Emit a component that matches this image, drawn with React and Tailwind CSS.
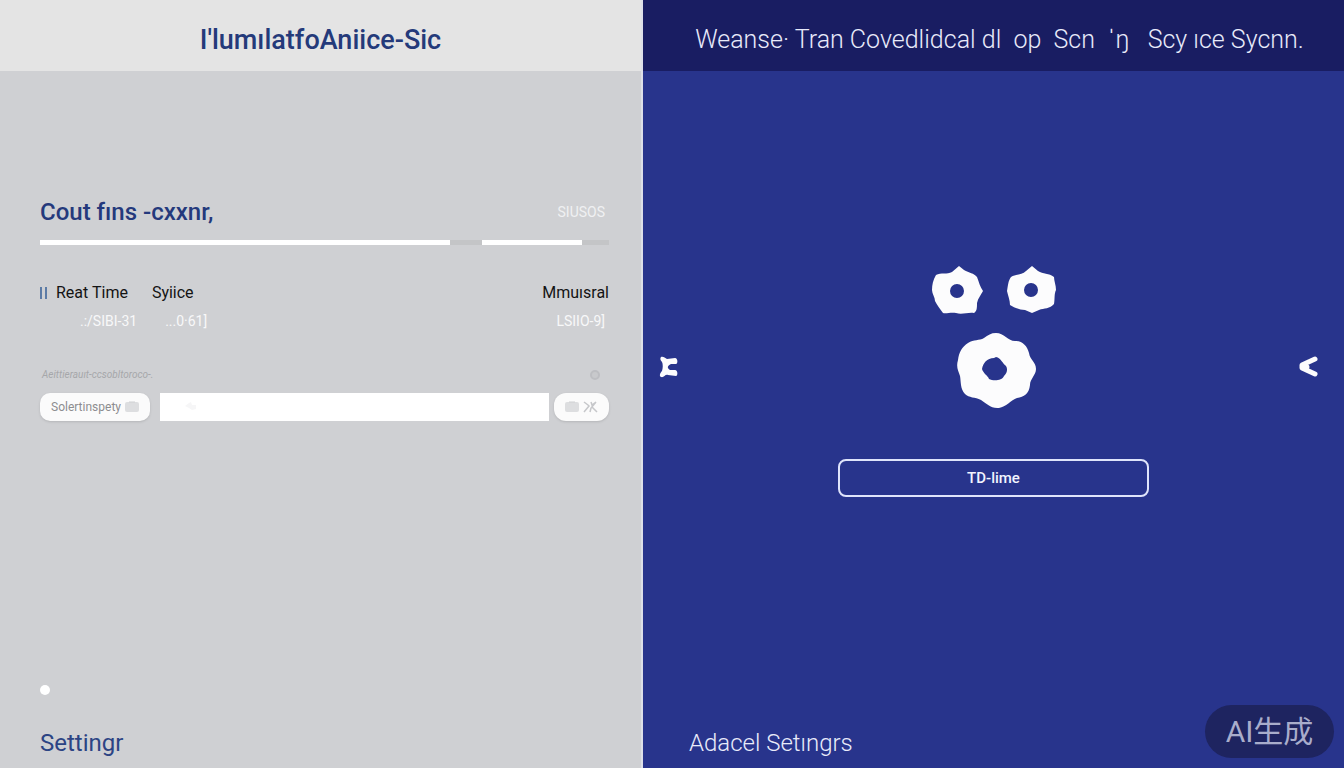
import { useState } from 'react'

const segments = [
  { grow: 411, filled: true },
  { grow: 32, filled: false },
  { grow: 100, filled: true },
  { grow: 27, filled: false },
]

function Gears() {
  return (
    <svg viewBox="0 0 126 146" className="h-[146px] w-[126px]" fill="#fcfcfd" aria-hidden="true">
      <path
        fillRule="evenodd"
        d="M28 1 L33 5 C38 8 43 8 46 12 C48 17 49 22 52 26 C50 30 47 33 46 38 C46 43 46 46 43 48 C37 47 31 50 25 48 C20 47 15 49 12 48 C9 44 6 40 4 36 C4 32 1 29 1 25 C1 20 2 15 5 10 C10 7 16 10 21 7 Z M26 19 A7 7 0 1 0 26 33 A7 7 0 1 0 26 19 Z"
      />
      <path
        fillRule="evenodd"
        d="M101 1 L107 6 C112 9 118 8 123 12 C123 16 125 20 125 25 C123 29 124 34 123 39 C119 44 113 43 108 45 L101 48 L94 45 C89 45 84 43 79 40 C79 35 77 31 76 26 C77 21 77 16 80 12 C85 9 91 10 95 6 Z M100 18 A7 7 0 1 0 100 32 A7 7 0 1 0 100 18 Z"
      />
      <path
        fillRule="evenodd"
        d="M65 68 C73 68 77 76 84 76 C92 76 96 81 98 88 C99 95 105 97 105 104 C105 110 99 114 99 120 C98 129 93 132 86 133 C80 135 75 142 68 143 C60 144 55 138 50 135 C44 132 38 133 34 129 C29 124 30 116 29 111 C27 105 25 102 27 95 C28 87 31 82 37 78 C43 74 48 76 53 73 C57 70 60 68 65 68 Z M63 93 C56 93 52 98 51 104 C52 108 57 111 58 114 C62 116 71 116 73 111 C76 108 77 104 75 101 C72 99 70 93 65 92 Z"
      />
    </svg>
  )
}

function CardIcon() {
  return (
    <svg viewBox="0 0 14 12" className="h-3 w-3.5 shrink-0" aria-hidden="true">
      <rect y="1" width="14" height="10" rx="2" fill="#dddee0" />
      <path d="M4 1 H10" stroke="#cfd0d2" strokeWidth="1" />
    </svg>
  )
}

function SyncPanel() {
  const [query, setQuery] = useState('')

  return (
    <section className="flex flex-col border-r-2 border-[#dddfe8] bg-[#cfd0d3]">
      <header className="flex h-[71px] items-center justify-center bg-[#e4e4e4] pt-2">
        <h1 className="text-[27px] leading-8 font-medium whitespace-nowrap text-[#243a7a]">
          I'lumılatfoAniice-Sic
        </h1>
      </header>

      <main className="flex-1 pt-[125px] pr-8 pl-10">
        <div className="flex items-center justify-between">
          <h2 className="text-[24px] leading-8 font-medium text-[#24397c]">Cout fıns -cxxnr,</h2>
          <span className="pr-1 text-[14px] leading-5 text-[#f0f0f2]">SIUSOS</span>
        </div>

        <div className="mt-3 flex h-[5px]">
          {segments.map((s, i) => (
            <div key={i} className={s.filled ? 'bg-white' : 'bg-[#c4c5c7]'} style={{ flexGrow: s.grow }} />
          ))}
        </div>

        <div className="mt-9 flex items-center text-[16px] leading-6 text-[#141414]">
          <svg viewBox="0 0 8 14" className="mr-2 h-3.5 w-2" stroke="#5c7ba6" strokeWidth="2" aria-hidden="true">
            <path d="M1 1 V13 M6 1 V13" />
          </svg>
          <span className="mr-6">Reat Time</span>
          <span>Syiice</span>
          <span className="ml-auto">Mmuısral</span>
        </div>
        <div className="mt-1.5 flex pr-1 pl-10 text-[14px] leading-5 text-[#f8f8f9]">
          <span className="mr-7">.:/SIBI-31</span>
          <span>...0·61]</span>
          <span className="ml-auto">LSIIO-9]</span>
        </div>

        <div className="mt-9 flex items-center justify-between pr-2">
          <label htmlFor="query" className="pl-0.5 text-[10px] leading-4 text-[#a6a7aa] italic">
            Aeittierauıt-ccsobltoroco-.
          </label>
          <svg viewBox="0 0 12 12" className="h-3 w-3" fill="#c8c9cc" stroke="#bdbec2" strokeWidth="2" aria-hidden="true">
            <circle cx="6" cy="6" r="4" />
          </svg>
        </div>
        <div className="mt-2.5 flex items-center">
          <button className="flex h-7 w-[110px] shrink-0 items-center justify-center gap-1 rounded-[10px] bg-[#fbfbfb] text-[12px] leading-4 text-[#8d8d90] shadow">
            Solertinspety
            <CardIcon />
          </button>
          <div className="relative mr-[5px] ml-2.5 min-w-0 flex-1">
            <input
              id="query"
              type="text"
              value={query}
              onChange={(e) => setQuery(e.target.value)}
              className="block h-7 w-full bg-white px-8 text-[12px] text-[#8d8d90] outline-none"
            />
            {!query && (
              <svg viewBox="0 0 12 10" className="pointer-events-none absolute top-2 left-6 h-2.5 w-3" fill="#f6f6f7" aria-hidden="true">
                <path d="M1 5 L5 2 L7 1 L8 4 L12 4 L12 8 L8 9 L5 7 Z" />
              </svg>
            )}
          </div>
          <button aria-label="Sync" className="flex h-7 w-[55px] shrink-0 items-center justify-center gap-1 rounded-[12px] bg-[#fbfbfb] shadow">
            <CardIcon />
            <svg viewBox="0 0 15 12" className="h-3 w-[15px]" fill="none" stroke="#c6c7ca" strokeWidth="1.5" aria-hidden="true">
              <path d="M1 1 L5 4 L6 5 L1 11 M8 1 L9 4 L13 1 M13 1 L8 7 L7 11 M9 6 L14 11" />
            </svg>
          </button>
        </div>
      </main>

      <footer className="h-[105px] pt-[22px] pl-10">
        <div className="h-2.5 w-2.5 rounded-full bg-white" />
        <p className="mt-8 text-[24px] leading-8 text-[#2c4484]">Settingr</p>
      </footer>
    </section>
  )
}

function SettingsPanel() {
  return (
    <section className="flex flex-col bg-[#28348c]">
      <header className="flex h-[71px] items-center justify-center bg-[#191d62] pt-2 pl-3">
        <h1 className="text-[25px] leading-8 font-light whitespace-pre text-[#e8eafa]">
          Weanse· Tran Covedlidcal dl  op  Scn  ˈŋ   Scy ıce Sycnn.
        </h1>
      </header>

      <main className="flex flex-1 items-center justify-between pr-[26px] pl-4">
        <button aria-label="Previous">
          <svg viewBox="0 0 20 22" className="h-[22px] w-5" fill="#fcfcfd" aria-hidden="true">
            <path d="M2 1 C4 0 6 2 8 3 L16 2 C19 2 19 8 17 8 L12 8 C8 10 8 12 11 14 L16 14 C19 14 19 20 17 20 L9 19 C6 18 5 22 2 21 C0 20 1 17 3 15 C4 12 4 8 3 6 C1 4 1 2 2 1 Z" />
          </svg>
        </button>
        <div className="flex flex-col items-center pt-7 pl-2.5">
          <Gears />
          <button className="mt-12 h-[38px] w-[311px] rounded-lg border-2 border-[#dfe4fb] text-[15px] leading-5 font-medium text-[#f2f4ff]">
            TD-lime
          </button>
        </div>
        <button aria-label="Next">
          <svg viewBox="0 0 20 22" className="h-[22px] w-5" fill="none" stroke="#fcfcfd" strokeWidth="5" strokeLinecap="round" strokeLinejoin="round" aria-hidden="true">
            <path d="M17 3 L4 9 L4 12 L17 18 M9 11 L4 10" />
          </svg>
        </button>
      </main>

      <footer className="h-[105px] pt-16 pl-[46px]">
        <p className="text-[24px] leading-8 font-light text-[#e9ebfa]">Adacel Setıngrs</p>
      </footer>
    </section>
  )
}

export default function App() {
  return (
    <div className="relative grid min-h-screen grid-cols-[643fr_701fr] font-[Roboto,'Noto_Sans_CJK_SC',sans-serif]">
      <SyncPanel />
      <SettingsPanel />
      <div className="absolute right-2.5 bottom-2.5 flex h-[53px] w-[129px] items-center justify-center rounded-full bg-[#1e2460] text-[30px] leading-8 text-[#a9adcb]">
        AI生成
      </div>
    </div>
  )
}
